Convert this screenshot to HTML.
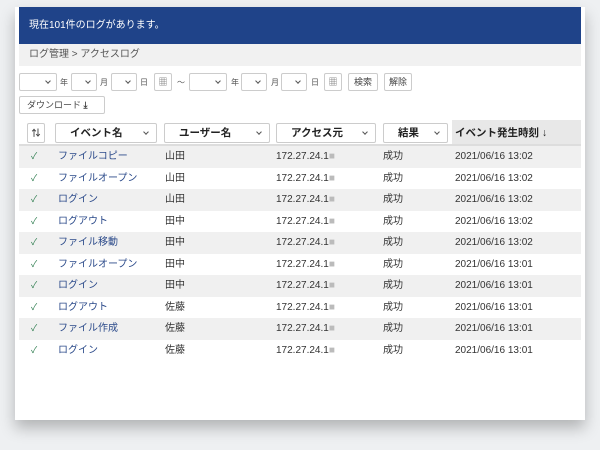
<!DOCTYPE html>
<html><head><meta charset="utf-8"><style>
*{box-sizing:border-box;margin:0;padding:0}
body{width:600px;height:450px;background:#eef0f2;font-family:"Liberation Sans","Noto Sans CJK JP",sans-serif;font-size:10px;color:#333;position:relative;overflow:hidden}
.card{position:absolute;left:15px;top:7px;width:570px;height:413px;background:#fff;box-shadow:0 8px 14px rgba(0,0,0,.25)}
.hd{position:absolute;left:4px;top:0;width:562px;height:37px;background:#1f4389;color:#fff;font-size:10px;line-height:37px;padding-left:10px}
.bc{position:absolute;left:4px;top:37px;width:562px;height:22px;background:#f1f1f1;line-height:22px;padding-left:10px;color:#555}
.ab{position:absolute}
.sel{position:absolute;height:18px;border:1px solid #ccc;border-radius:2px;background:#fff}
.sel:after{content:"";position:absolute;right:6px;top:5px;width:3px;height:3px;border-right:1px solid #555;border-bottom:1px solid #555;transform:rotate(45deg)}
.lbl{position:absolute;font-size:8px;color:#555}
.btn{position:absolute;height:18px;border:1px solid #ccc;border-radius:2px;background:#fff;font-size:9px;line-height:16px;text-align:center;color:#444}
.hs{position:absolute;top:116px;height:20px;border:1px solid #ccc;border-radius:2px;background:#fff;font-weight:bold;font-size:10.5px;line-height:18px;padding-left:14px;color:#222}
.hs:after{content:"";position:absolute;right:8px;top:6px;width:3px;height:3px;border-right:1px solid #555;border-bottom:1px solid #555;transform:rotate(45deg)}
.row{position:absolute;left:4px;width:562px;height:21.5px;line-height:21.5px;font-size:10px}
.row.g{background:#f0f0f0}
.row span{position:absolute}
.ck{left:12px;color:#2e7d4f;font-size:9px}
.nm{left:39px;color:#2b4a8a}
.us{left:146px}
.ip{left:257px}
.rs{left:364px}
.tm{left:436px}
.bl{color:#bbb}
</style></head><body>
<div class="card">
<div class="hd">現在101件のログがあります。</div>
<div class="bc">ログ管理 &gt; アクセスログ</div>
<div class="sel" style="left:4px;top:66px;width:38px"></div><span class="lbl" style="left:45px;top:70px">年</span>
<div class="sel" style="left:56px;top:66px;width:26px"></div><span class="lbl" style="left:85px;top:70px">月</span>
<div class="sel" style="left:96px;top:66px;width:26px"></div><span class="lbl" style="left:125px;top:70px">日</span>
<div class="btn" style="left:139px;top:66px;width:18px;color:#777">▦</div>
<span class="lbl" style="left:162px;top:70px">〜</span>
<div class="sel" style="left:174px;top:66px;width:38px"></div><span class="lbl" style="left:216px;top:70px">年</span>
<div class="sel" style="left:226px;top:66px;width:26px"></div><span class="lbl" style="left:256px;top:70px">月</span>
<div class="sel" style="left:266px;top:66px;width:26px"></div><span class="lbl" style="left:296px;top:70px">日</span>
<div class="btn" style="left:309px;top:66px;width:18px;color:#777">▦</div>
<div class="btn" style="left:333px;top:66px;width:30px">検索</div>
<div class="btn" style="left:369px;top:66px;width:28px">解除</div>
<div class="btn" style="left:4px;top:89px;width:86px;text-align:left;padding-left:7px">ダウンロード <span style="font-weight:bold">⤓</span></div>
<div class="btn" style="left:12px;top:116px;width:18px;height:20px;font-weight:bold;line-height:18px">⇅</div>
<div class="hs" style="left:40px;width:102px">イベント名</div>
<div class="hs" style="left:149px;width:106px">ユーザー名</div>
<div class="hs" style="left:261px;width:100px">アクセス元</div>
<div class="hs" style="left:368px;width:65px">結果</div>
<div class="ab" style="left:437px;top:113px;width:129px;height:26px;background:#e8e8e8;font-weight:bold;font-size:10.5px;line-height:26px;padding-left:3px;color:#222">イベント発生時刻 ↓</div>
<div class="ab" style="left:4px;top:137px;width:562px;height:2px;background:#ddd"></div>
<div class="row g" style="top:139px"><span class="ck">✓</span><span class="nm">ファイルコピー</span><span class="us">山田</span><span class="ip">172.27.24.1<span class="bl">■</span></span><span class="rs">成功</span><span class="tm">2021/06/16 13:02</span></div>
<div class="row" style="top:160.5px"><span class="ck">✓</span><span class="nm">ファイルオープン</span><span class="us">山田</span><span class="ip">172.27.24.1<span class="bl">■</span></span><span class="rs">成功</span><span class="tm">2021/06/16 13:02</span></div>
<div class="row g" style="top:182px"><span class="ck">✓</span><span class="nm">ログイン</span><span class="us">山田</span><span class="ip">172.27.24.1<span class="bl">■</span></span><span class="rs">成功</span><span class="tm">2021/06/16 13:02</span></div>
<div class="row" style="top:203.5px"><span class="ck">✓</span><span class="nm">ログアウト</span><span class="us">田中</span><span class="ip">172.27.24.1<span class="bl">■</span></span><span class="rs">成功</span><span class="tm">2021/06/16 13:02</span></div>
<div class="row g" style="top:225px"><span class="ck">✓</span><span class="nm">ファイル移動</span><span class="us">田中</span><span class="ip">172.27.24.1<span class="bl">■</span></span><span class="rs">成功</span><span class="tm">2021/06/16 13:02</span></div>
<div class="row" style="top:246.5px"><span class="ck">✓</span><span class="nm">ファイルオープン</span><span class="us">田中</span><span class="ip">172.27.24.1<span class="bl">■</span></span><span class="rs">成功</span><span class="tm">2021/06/16 13:01</span></div>
<div class="row g" style="top:268px"><span class="ck">✓</span><span class="nm">ログイン</span><span class="us">田中</span><span class="ip">172.27.24.1<span class="bl">■</span></span><span class="rs">成功</span><span class="tm">2021/06/16 13:01</span></div>
<div class="row" style="top:289.5px"><span class="ck">✓</span><span class="nm">ログアウト</span><span class="us">佐藤</span><span class="ip">172.27.24.1<span class="bl">■</span></span><span class="rs">成功</span><span class="tm">2021/06/16 13:01</span></div>
<div class="row g" style="top:311px"><span class="ck">✓</span><span class="nm">ファイル作成</span><span class="us">佐藤</span><span class="ip">172.27.24.1<span class="bl">■</span></span><span class="rs">成功</span><span class="tm">2021/06/16 13:01</span></div>
<div class="row" style="top:332.5px"><span class="ck">✓</span><span class="nm">ログイン</span><span class="us">佐藤</span><span class="ip">172.27.24.1<span class="bl">■</span></span><span class="rs">成功</span><span class="tm">2021/06/16 13:01</span></div>
</div>
</body></html>
